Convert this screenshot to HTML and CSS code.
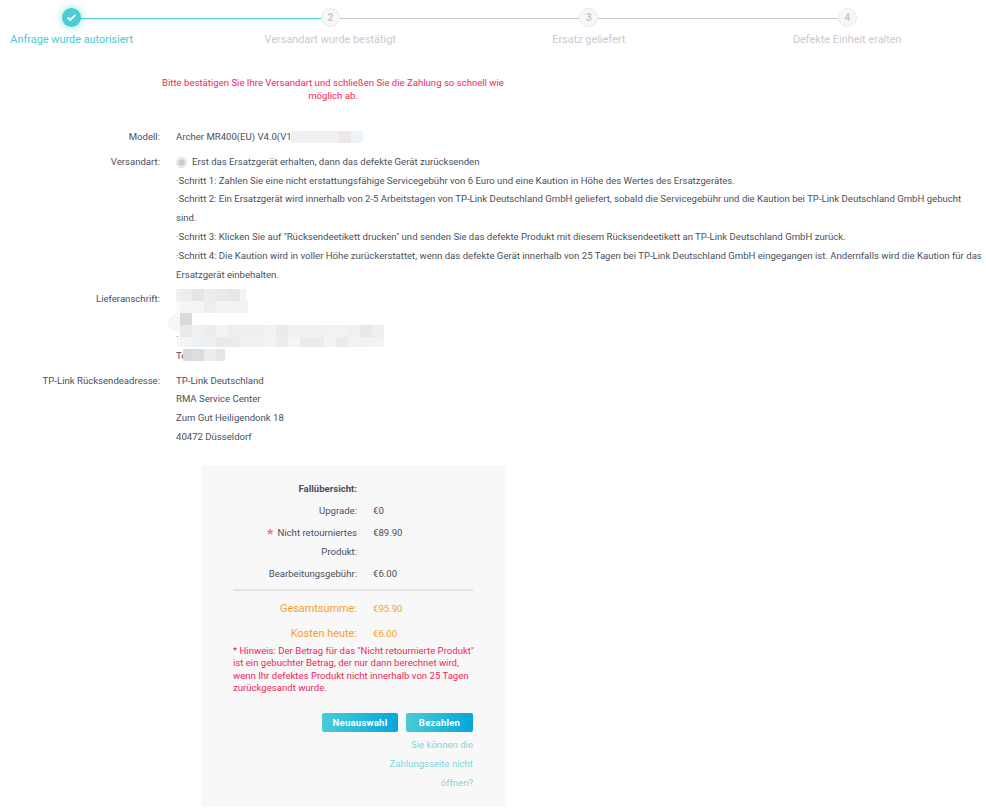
FILE: index.html
```html
<!DOCTYPE html>
<html lang="de">
<head>
    <meta charset="UTF-8">
    <meta name="viewport" content="width=device-width, initial-scale=1.0">
    <title>Versandart</title>
    <link rel="stylesheet" href="styles.css">
</head>
<body>
    <div class="stepper">
        <div class="step done">
            <div class="step-dot">
                <svg width="11" height="9" viewBox="0 0 11 9"><path d="M1.5 4.5 L4.2 7 L9.5 1.8" fill="none" stroke="#fff" stroke-width="1.8"/></svg>
            </div>
            <div class="step-label">Anfrage wurde autorisiert</div>
        </div>
        <div class="step">
            <div class="step-dot">2</div>
            <div class="step-label">Versandart wurde bestätigt</div>
        </div>
        <div class="step">
            <div class="step-dot">3</div>
            <div class="step-label">Ersatz geliefert</div>
        </div>
        <div class="step last">
            <div class="step-dot">4</div>
            <div class="step-label">Defekte Einheit eralten</div>
        </div>
    </div>

    <p class="notice">Bitte bestätigen Sie Ihre Versandart und schließen Sie die Zahlung so schnell wie möglich ab.</p>

    <div class="form">
        <div class="row">
            <div class="label">Modell:</div>
            <div class="value">Archer MR400(EU) V4.0(V1<span class="blur-model"></span></div>
        </div>
        <div class="row">
            <div class="label">Versandart:</div>
            <div class="value">
                <div class="radio-line"><span class="radio"></span>Erst das Ersatzgerät erhalten, dann das defekte Gerät zurücksenden</div>
                <div>·Schritt 1: Zahlen Sie eine nicht erstattungsfähige Servicegebühr von 6 Euro und eine Kaution in Höhe des Wertes des Ersatzgerätes.</div>
                <div>·Schritt 2: Ein Ersatzgerät wird innerhalb von 2-5 Arbeitstagen von TP-Link Deutschland GmbH geliefert, sobald die Servicegebühr und die Kaution bei TP-Link Deutschland GmbH gebucht sind.</div>
                <div>·Schritt 3: Klicken Sie auf "Rücksendeetikett drucken" und senden Sie das defekte Produkt mit diesem Rücksendeetikett an TP-Link Deutschland GmbH zurück.</div>
                <div>·Schritt 4: Die Kaution wird in voller Höhe zurückerstattet, wenn das defekte Gerät innerhalb von 25 Tagen bei TP-Link Deutschland GmbH eingegangen ist. Andernfalls wird die Kaution für das Ersatzgerät einbehalten.</div>
            </div>
        </div>
        <div class="row">
            <div class="label">Lieferanschrift:</div>
            <div class="value address">
                <div>&nbsp;</div>
                <div>&nbsp;</div>
                <div>·</div>
                <div>Te</div>
                <!-- pixelated address, sits on top of the text -->
                <svg class="mosaic" width="220" height="76" viewBox="0 0 220 76">
                    <g>
                        <rect x="0" y="0" width="4" height="12" fill="#f0f0f1"/>
                        <rect x="4" y="0" width="12" height="12" fill="#ecedee"/>
                        <rect x="16" y="0" width="12" height="12" fill="#e4e5e7"/>
                        <rect x="28" y="0" width="12" height="12" fill="#ededef"/>
                        <rect x="40" y="0" width="12" height="12" fill="#e8e9eb"/>
                        <rect x="52" y="0" width="12" height="12" fill="#e6e7e9"/>
                        <rect x="64" y="0" width="6" height="12" fill="#f4f4f4"/>
                    </g>
                    <g>
                        <rect x="0" y="12" width="4" height="12" fill="#fafafa"/>
                        <rect x="4" y="12" width="24" height="12" fill="#f5f5f5"/>
                        <rect x="28" y="12" width="12" height="12" fill="#eeeef0"/>
                        <rect x="40" y="12" width="12" height="12" fill="#f3f3f5"/>
                        <rect x="52" y="12" width="12" height="12" fill="#f1f2f4"/>
                        <rect x="64" y="12" width="8" height="12" fill="#f2f3f3"/>
                    </g>
                    <path d="M-8 31 L0 24 L4 24 L4 42 L-4 42 L-8 36 Z" fill="#f5f6f6"/>
                    <rect x="4" y="24" width="12" height="12" fill="#d8d9db"/>
                    <g>
                        <rect x="4" y="36" width="12" height="12" fill="#ebeaea"/>
                        <rect x="16" y="36" width="12" height="12" fill="#eef1f3"/>
                        <rect x="28" y="36" width="12" height="12" fill="#ecedef"/>
                        <rect x="40" y="36" width="12" height="12" fill="#f2f3f3"/>
                        <rect x="52" y="36" width="12" height="12" fill="#edeef0"/>
                        <rect x="64" y="36" width="12" height="12" fill="#efeff0"/>
                        <rect x="76" y="36" width="12" height="12" fill="#eeeff2"/>
                        <rect x="88" y="36" width="12" height="12" fill="#f2f2f3"/>
                        <rect x="100" y="36" width="12" height="12" fill="#ebeaec"/>
                        <rect x="112" y="36" width="12" height="12" fill="#eff1f1"/>
                        <rect x="124" y="36" width="24" height="12" fill="#f0f1f3"/>
                        <rect x="148" y="36" width="12" height="12" fill="#f1f2f2"/>
                        <rect x="160" y="36" width="12" height="12" fill="#f1f2f4"/>
                        <rect x="172" y="36" width="12" height="12" fill="#eff0f2"/>
                        <rect x="184" y="36" width="12" height="12" fill="#e8e9e9"/>
                        <rect x="196" y="36" width="12" height="12" fill="#edeef0"/>
                    </g>
                    <g>
                        <rect x="1" y="48" width="3" height="10" fill="#f8f8f8"/>
                        <rect x="4" y="48" width="12" height="10" fill="#f5f4f2"/>
                        <rect x="16" y="48" width="12" height="10" fill="#eef1f3"/>
                        <rect x="28" y="48" width="12" height="10" fill="#eeeff1"/>
                        <rect x="40" y="48" width="12" height="10" fill="#e9eaec"/>
                        <rect x="52" y="48" width="12" height="10" fill="#ebebeb"/>
                        <rect x="64" y="48" width="12" height="10" fill="#f1f0f1"/>
                        <rect x="76" y="48" width="12" height="10" fill="#eff0f1"/>
                        <rect x="88" y="48" width="12" height="10" fill="#f3f3f3"/>
                        <rect x="100" y="48" width="12" height="10" fill="#eeeced"/>
                        <rect x="112" y="48" width="12" height="10" fill="#f4f5f5"/>
                        <rect x="124" y="48" width="24" height="10" fill="#eaecec"/>
                        <rect x="148" y="48" width="12" height="10" fill="#f4f4f4"/>
                        <rect x="160" y="48" width="12" height="10" fill="#ebecee"/>
                        <rect x="172" y="48" width="12" height="10" fill="#f2f2f3"/>
                        <rect x="184" y="48" width="12" height="10" fill="#f1f2f2"/>
                        <rect x="196" y="48" width="12" height="10" fill="#f2f3f4"/>
                    </g>
                    <g>
                        <rect x="7" y="60" width="9" height="12" fill="#d9dadd"/>
                        <rect x="16" y="60" width="12" height="12" fill="#dcdde0"/>
                        <rect x="28" y="60" width="12" height="12" fill="#eaeced"/>
                        <rect x="40" y="60" width="9" height="12" fill="#e4e5e7"/>
                    </g>
                </svg>
            </div>
        </div>
        <div class="row">
            <div class="label">TP-Link Rücksendeadresse:</div>
            <div class="value">
                <div>TP-Link Deutschland</div>
                <div>RMA Service Center</div>
                <div>Zum Gut Heiligendonk 18</div>
                <div>40472 Düsseldorf</div>
            </div>
        </div>
    </div>

    <div class="panel">
        <div class="sum-row title"><div class="sum-label">Fallübersicht:</div><div class="sum-value"></div></div>
        <div class="sum-row"><div class="sum-label">Upgrade:</div><div class="sum-value">€0</div></div>
        <div class="sum-row"><div class="sum-label"><span class="star">*</span> Nicht retourniertes Produkt:</div><div class="sum-value">€89.90</div></div>
        <div class="sum-row"><div class="sum-label">Bearbeitungsgebühr:</div><div class="sum-value">€6.00</div></div>
        <div class="divider"></div>
        <div class="sum-row total"><div class="sum-label">Gesamtsumme:</div><div class="sum-value">€95.90</div></div>
        <div class="sum-row total"><div class="sum-label">Kosten heute:</div><div class="sum-value">€6.00</div></div>
        <p class="hint">* Hinweis: Der Betrag für das "Nicht retournierte Produkt" ist ein gebuchter Betrag, der nur dann berechnet wird, wenn Ihr defektes Produkt nicht innerhalb von 25 Tagen zurückgesandt wurde.</p>
        <div class="actions">
            <button class="btn btn-reselect">Neuauswahl</button>
            <button class="btn btn-pay">Bezahlen</button>
        </div>
        <a class="help" href="#">Sie können die Zahlungsseite nicht öffnen?</a>
    </div>
</body>
</html>
```

FILE: styles.css
```css
body {
    margin: 0;
    background-color: #fff;
    font-family: "Roboto", "Noto Sans", sans-serif;
    font-size: 9.58px;
    color: #4a4f5c;
    overflow-x: hidden;
}

.stepper {
    display: flex;
    margin-left: -57.5px;
    padding-top: 8px;
}
.step {
    position: relative;
    width: 258.5px;
    flex: none;
    text-align: center;
}
.step::after {
    content: "";
    position: absolute;
    top: 10px;
    left: 50%;
    width: 100%;
    height: 1px;
    background-color: #c4c6cc;
}
.step.done::after {
    background-color: #4acbd6;
}
.step.last::after {
    display: none;
}
.step-dot {
    position: relative;
    z-index: 1;
    width: 17px;
    height: 17px;
    margin: 0 auto;
    border: 1px solid #eaeaea;
    border-radius: 50%;
    background-color: #f7f7f7;
    color: #c8c8c8;
    font-size: 10px;
    font-weight: 700;
    line-height: 17px;
}
.step.done .step-dot {
    display: flex;
    align-items: center;
    justify-content: center;
    width: 19px;
    height: 19px;
    border: 0;
    background-color: #4acbd6;
    box-shadow: 0 0 8px rgba(74, 203, 214, 0.65);
}
.step-label {
    margin-top: 5px;
    color: #c9cad2;
    font-size: 10.9px;
    line-height: 15px;
}
.step.done .step-label {
    color: #4acbd6;
}

.notice {
    width: 350px;
    margin: 29px 0 0 158px;
    color: #f0265a;
    text-align: center;
    line-height: 13px;
}

.form {
    margin-top: 26px;
    width: 983px;
}
.row {
    display: flex;
    margin-bottom: 6px;
    line-height: 18.8px;
}
.label {
    flex: none;
    width: 160px;
    text-align: right;
}
.value {
    flex: 1;
    margin-left: 16px;
}
.blur-model {
    display: inline-block;
    vertical-align: middle;
    width: 72px;
    height: 12px;
    margin-left: -1px;
    background: linear-gradient(90deg, #f0f0f0 0, #f0f0f0 48px, #ebe8e7 48px, #ebe8e7 60px, #f0f3f5 60px);
}
.radio-line {
    display: flex;
    align-items: center;
}
.radio {
    width: 9px;
    height: 9px;
    margin-right: 5px;
    border: 1px solid #e2e2e2;
    border-radius: 50%;
    background-color: #ccc;
    box-shadow: inset 0 0 0 1px #fff;
}

.address {
    position: relative;
}
.mosaic {
    position: absolute;
    top: -1px;
    left: 0;
    overflow: visible;
}

.panel {
    width: 240px;
    margin: 18px 0 0 201px;
    padding: 14px 32px 15px;
    background-color: #f8f8f8;
}
.sum-row {
    display: flex;
    margin-bottom: 3px;
    line-height: 19px;
}
.sum-label {
    flex: none;
    width: 124px;
    text-align: right;
}
.sum-value {
    margin-left: 16px;
}
.title .sum-label {
    font-weight: 700;
}
.star {
    margin-right: 2px;
    color: #f4728a;
    font-family: "Liberation Sans", sans-serif;
    font-size: 15px;
    font-weight: 700;
    line-height: 0;
    vertical-align: -3px;
}
.divider {
    height: 2px;
    margin: 6px 0 8px;
    background-color: #e4e4e4;
}
.total {
    color: #f9a024;
    margin-bottom: 6px;
}
.total .sum-label {
    font-size: 10.9px;
}
.hint {
    margin: -4px -3px 0 0;
    color: #f0265a;
    line-height: 12.5px;
}
.actions {
    display: flex;
    justify-content: flex-end;
    gap: 8px;
    margin-top: 18px;
}
.btn {
    height: 19px;
    padding: 0;
    border: 0;
    border-radius: 2px;
    background: linear-gradient(90deg, #4acbd6, #04a6dc);
    color: #fff;
    font-family: inherit;
    font-size: 9.58px;
    font-weight: 700;
    letter-spacing: 0.2px;
}
.btn-reselect {
    width: 76px;
}
.btn-pay {
    width: 67px;
}
.help {
    display: block;
    width: 100px;
    margin: 3px 0 0 auto;
    color: #7fd5de;
    text-align: right;
    line-height: 19px;
    text-decoration: none;
}
```
